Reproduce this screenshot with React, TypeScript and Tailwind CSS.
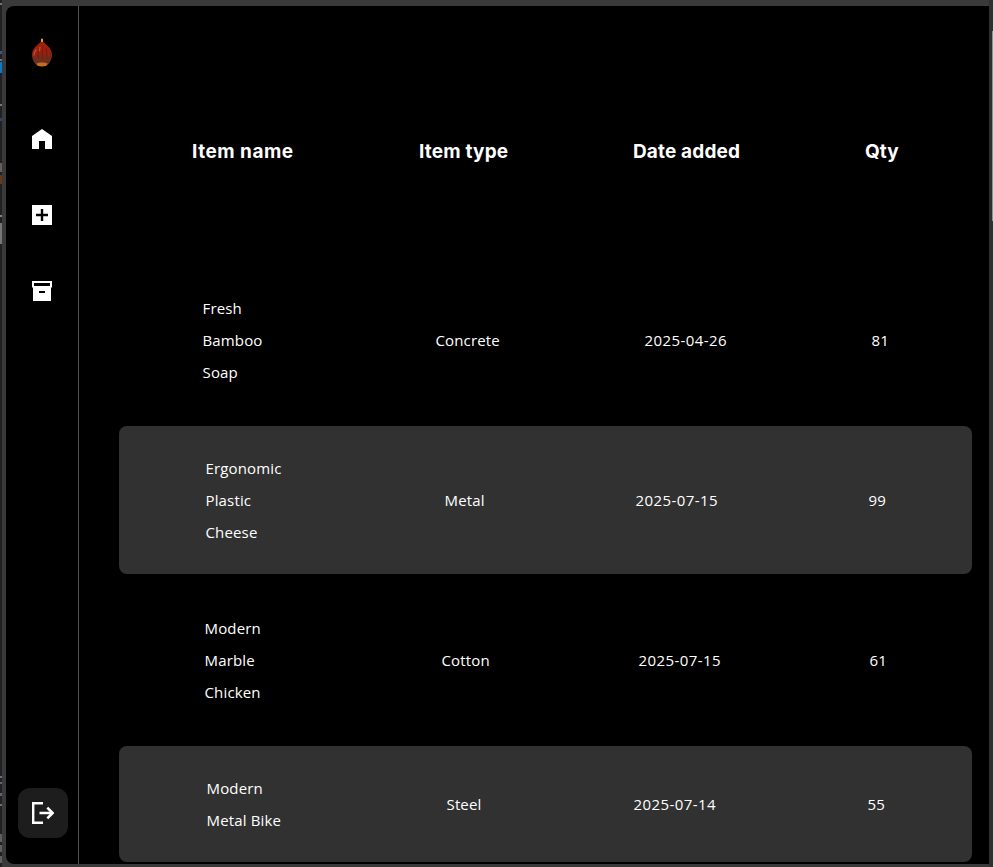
import React from "react";

type Row = { cols: string; shade: string; name: string[]; type: string; date: string; qty: string };

const rows: Row[] = [
  { cols: "pl-[83.5px] grid-cols-[233px_209px_227px_1fr] h-[148px]", shade: "", name: ["Fresh", "Bamboo", "Soap"], type: "Concrete", date: "2025-04-26", qty: "81" },
  { cols: "pl-[86.5px] grid-cols-[239px_191px_233px_1fr] h-[148px]", shade: "bg-[#313131]", name: ["Ergonomic", "Plastic", "Cheese"], type: "Metal", date: "2025-07-15", qty: "99" },
  { cols: "pl-[85.5px] grid-cols-[237px_197px_231px_1fr] h-[148px]", shade: "", name: ["Modern", "Marble", "Chicken"], type: "Cotton", date: "2025-07-15", qty: "61" },
  { cols: "pl-[87.5px] grid-cols-[240px_187px_234px_1fr] h-[116px]", shade: "bg-[#313131]", name: ["Modern", "Metal Bike"], type: "Steel", date: "2025-07-14", qty: "55" },
];

function Logo() {
  return (
    <svg width="22" height="30" viewBox="0 0 22 30" className="mt-8 shrink-0">
      <defs>
        <linearGradient id="shell" x1="0" y1="0" x2="0" y2="1">
          <stop offset="0" stopColor="#a82006" />
          <stop offset=".45" stopColor="#96200c" />
          <stop offset="1" stopColor="#533629" />
        </linearGradient>
      </defs>
      <path d="M11 2.5C9 6 1 8.500 1 17c0 5 3 9 5 10.500h10c2-1.500 5-5.500 5-10.500C21 8.500 13 6 11 2.500Z" fill="url(#shell)" />
      <path d="M8 10c-1 4-1 7-.5 11M11.500 8v14M15 10c1.300 4 1 8 .5 11" stroke="#5e1609" strokeWidth=".8" fill="none" opacity=".6" />
      <path d="M5 12c-1.500 2-2 3-2 5M9 9.500l-.6 3" stroke="#cf5440" strokeWidth="1.300" fill="none" strokeLinecap="round" opacity=".85" />
      <path d="M5.500 25.500c3-1.200 8-1.200 11 0l-1.200 2.300c-2.500.8-6.200.8-8.600 0Z" fill="#c86d19" />
      <path d="M10 .7h2v3.300h-2z" fill="#dda03d" />
    </svg>
  );
}

export default function App() {
  return (
    <div className="flex h-[867px] w-[993px] overflow-hidden bg-[#3a3a3a] text-white">
      <div className="mr-1 flex w-[2px] shrink-0 flex-col bg-[#202124]">
        <div className="mt-[3px] h-[2px] bg-[#80756c]" />
        <div className="mt-[46px] h-[3px] bg-[#42507c]" />
        <div className="mt-[5px] h-[2px] bg-[#777777]" />
        <div className="mt-[1px] h-[11px] bg-[#0878c8]" />
        <div className="mt-[31px] h-[2px] bg-[#807870]" />
        <div className="mt-[12px] h-[3px] bg-[#344264]" />
        <div className="mt-[42px] h-[9px] bg-[#66605c]" />
        <div className="mt-[3px] h-[9px] bg-[#6b3516]" />
        <div className="mt-[31px] h-[2px] bg-[#858585]" />
        <div className="mt-[6px] h-[21px] bg-[#777777]" />
        <div className="mt-[532px] h-[2px] bg-[#707070]" />
        <div className="mt-[4px] h-[2px] bg-[#606470]" />
        <div className="mt-[9px] h-[3px] bg-[#606470]" />
        <div className="mt-[8px] h-[2px] bg-[#707070]" />
        <div className="mt-[28px] h-[8px] bg-[#606060]" />
        <div className="mt-[3px] h-[7px] bg-[#606060]" />
        <div className="mt-[4px] h-[7px] bg-[#606060]" />
      </div>
      <div className="mt-[6px] flex h-[858px] w-[983px] shrink-0 overflow-hidden rounded-l-lg bg-black">
        <nav className="flex w-[73px] shrink-0 flex-col items-center border-r border-[#505050]">
          <Logo />
          <svg width="20" height="20" viewBox="0 0 20 20" className="mt-[61px]" fill="#fff"><path d="M10 0 20 7v13h-7v-8H7v8H0V7Z" /></svg>
          <svg width="20" height="20" viewBox="0 0 20 20" className="mt-14" fill="#fff"><path fillRule="evenodd" d="M0 0h20v20H0ZM8.800 4v4.800H4v2.400h4.800V16h2.400v-4.800H16V8.800h-4.800V4Z" /></svg>
          <svg width="20" height="20" viewBox="0 0 20 20" className="mt-14" fill="#fff"><path fillRule="evenodd" d="M0 0h20v6.500h-1V20H1V6.500H0ZM2 2v3h16V2ZM7 10v2h6v-2Z" /></svg>
          <button className="mt-auto mb-[26px] flex h-[50px] w-[50px] translate-x-px items-center justify-center rounded-xl bg-[#1d1d1d]">
            <svg width="22" height="22" viewBox="0 0 22 22" fill="none" stroke="#fff" strokeWidth="2.400"><path d="M11 1.200H1.200v19.600H11M7.500 11H20" /><path d="m15.300 5.700 5.300 5.300-5.300 5.300" strokeWidth="2.600" /></svg>
          </button>
        </nav>
        <main className="flex grow flex-col pl-10 pr-[17px]">
          <div className="grid h-[260px] grid-cols-[227px_214px_232px_1fr] pt-[132px] pl-[73px] font-[Inter,sans-serif] text-[19px] leading-7 font-bold">
            <span className="tracking-[0.027em]">Item name</span>
            <span className="tracking-[0.01em]">Item type</span>
            <span className="tracking-[0.008em]">Date added</span>
            <span>Qty</span>
          </div>
          <div className="flex flex-col gap-3 font-['Open_Sans',sans-serif] text-[15px] leading-8 tracking-[0.15px]">
            {rows.map((r) => (
              <div key={r.name.join(" ")} className={`grid shrink-0 items-center rounded-lg ${r.cols} ${r.shade}`}>
                <div>{r.name.map((n) => <div key={n}>{n}</div>)}</div>
                <span>{r.type}</span>
                <span className="tracking-[0.42px]">{r.date}</span>
                <span>{r.qty}</span>
              </div>
            ))}
          </div>
        </main>
      </div>
      <div className="flex w-1 shrink-0 flex-col items-end bg-[#303030]">
        <div className="mt-[31px] h-[190px] w-px bg-[#909090]" />
      </div>
    </div>
  );
}
